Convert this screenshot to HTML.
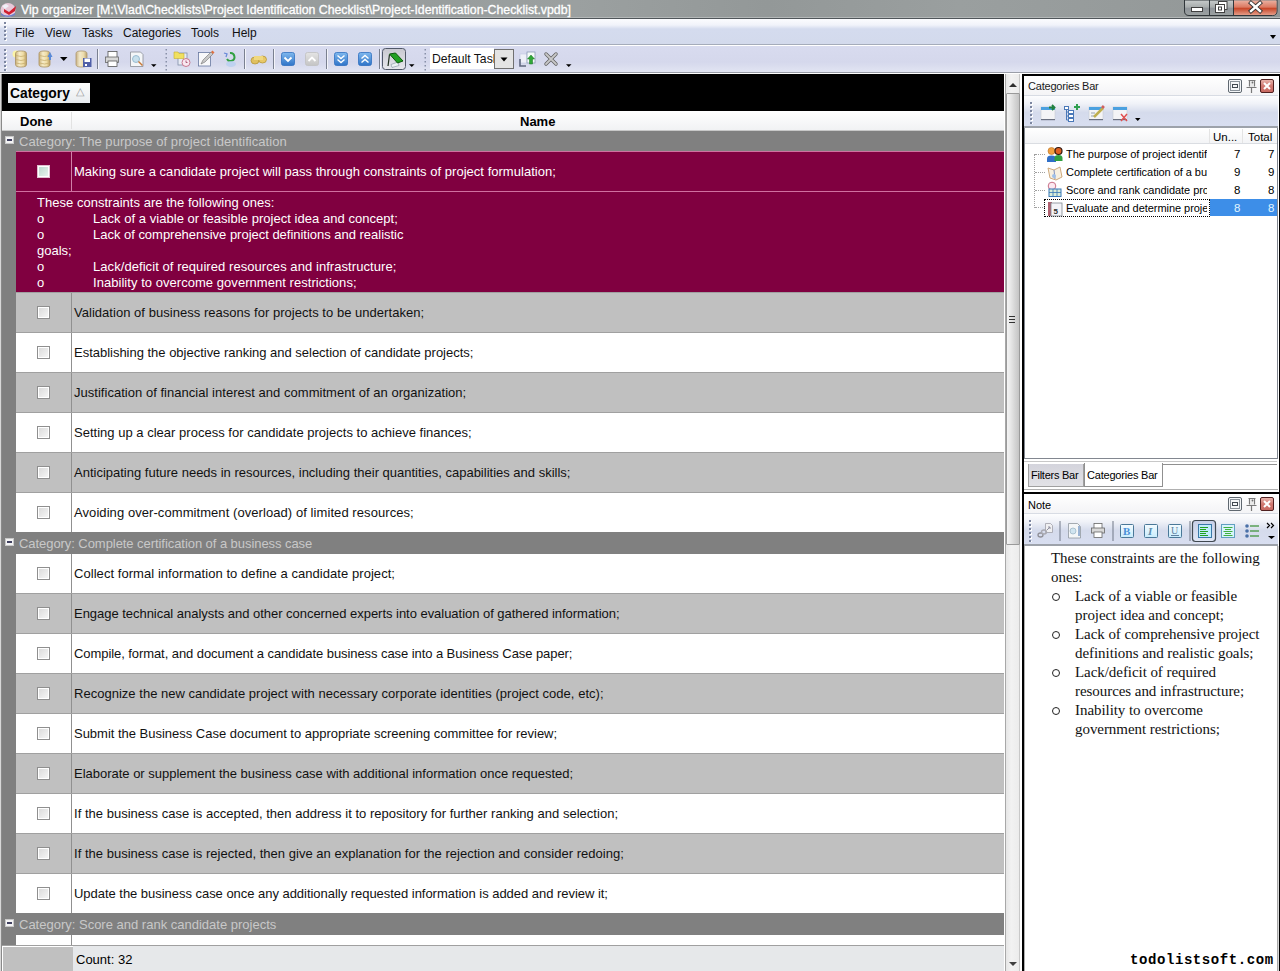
<!DOCTYPE html>
<html><head><meta charset="utf-8">
<style>
*{margin:0;padding:0;box-sizing:border-box}
html,body{width:1280px;height:971px;overflow:hidden;background:#fff;font-family:"Liberation Sans",sans-serif;font-size:13px;color:#000;position:relative}
div{position:absolute}
.nw{white-space:nowrap}
#title{left:0;top:0;width:1280px;height:19px;background:linear-gradient(90deg,#8d9292,#979c9c 25%,#9ba0a0 45%,#939898 60%,#9a9f9f 75%,#929797);border-bottom:1px solid #50565a;box-shadow:inset 0 -1px 0 #b4b8b8}
#menu{left:0;top:19px;width:1280px;height:26px;background:linear-gradient(#fbfcfe 0,#f1f3fa 6px,#d4dbee 10px,#d3daec 100%);border-bottom:1px solid #a5acba}
#tool{left:0;top:45px;width:1280px;height:29px;background:linear-gradient(#d8dbef,#d5d8ec 60%,#e3e6f3);border-top:1px solid #fff;border-bottom:1px solid #fff;box-shadow:inset 0 -1px 0 #9a9ea8}
.mi{top:26px;font-size:12px;color:#111;white-space:nowrap}
.grip{width:3px;background:radial-gradient(circle at 1px 1px,#7c86a0 0.9px,transparent 1.3px) 0 0/3px 4px,radial-gradient(circle at 2px 2px,#fff 0.9px,transparent 1.3px) 0 0/3px 4px}
.sep{width:2px;border-left:1px solid #6e7580;border-right:1px solid #fff}
#gridbg{left:0;top:74px;width:1005px;height:897px;background:#808080;border-left:1px solid #d8d8d8;box-shadow:inset 1px 0 0 #8a8a8a}
.row{left:16px;width:988px;height:40px;background:#fff;border-top:1px solid #a0a0a0}
.row.g{background:#c0c0c0}
.row.s{background:#800040;border-top-color:#d070a0}
.row.s .tx{color:#fff}
.row .cb{left:21px;top:13px;width:13px;height:13px;border:1px solid #8f8f8f;background:linear-gradient(135deg,#d8d8d8,#f8f8f8);box-shadow:inset 0 0 0 1px #fff}
.row.s .cb{border-color:#e0c0d0;background:linear-gradient(135deg,#b8d8cc,#eef6f2)}
.row .dv{left:55px;top:0;width:1px;height:39px;background:#909090}
.row.s .dv{background:#d080a8}
.row .tx{left:58px;top:12px;white-space:nowrap;color:#111}
.grp{left:2px;width:1002px;height:22px;z-index:1;background:#808080;color:#c8c8c8}
.grp .mn{left:3px;top:5px;width:9px;height:8px;background:#f4f4f4;border:1px solid #c8c8c8}
.grp .mn:after{content:"";position:absolute;left:1px;top:2px;width:5px;height:2px;background:#404060}
.grp .gt{left:17px;top:3px;white-space:nowrap}
.prev{left:16px;width:988px;height:101px;background:#800040;color:#fff;border-top:1px solid #d070a0}
.pl{left:21px;white-space:nowrap}

</style></head><body>
<div id="title">
  <svg style="position:absolute;left:0;top:2px" width="17" height="16" viewBox="0 0 17 16"><ellipse cx="8" cy="8" rx="7.5" ry="7" fill="#e8c8d8"/><path d="M1 11q6 5 14 0v2q-7 4-14 0z" fill="#7080c8"/><path d="M4 7l5 3 7-6-1 5-6 4-5-3z" fill="#d02030"/><path d="M2 4l4-2 3 2-4 3z" fill="#f0f0f8"/></svg>
  <div class="nw" style="left:21px;top:3px;font-size:12.3px;color:#fff;-webkit-text-stroke:0.3px #fff">Vip organizer [M:\Vlad\Checklists\Project Identification Checklist\Project-Identification-Checklist.vpdb]</div>
</div>
<svg style="position:absolute;left:1180px;top:0" width="100" height="19" viewBox="1180 0 100 19">
<defs>
<linearGradient id="wb" x1="0" y1="0" x2="0" y2="1"><stop offset="0" stop-color="#c8cccc"/><stop offset=".45" stop-color="#a8adad"/><stop offset=".55" stop-color="#90959a"/><stop offset="1" stop-color="#9ca2a2"/></linearGradient>
<linearGradient id="wc" x1="0" y1="0" x2="0" y2="1"><stop offset="0" stop-color="#eab0a0"/><stop offset=".45" stop-color="#dc7a62"/><stop offset=".55" stop-color="#c8482a"/><stop offset="1" stop-color="#e49c88"/></linearGradient>
</defs>
<path d="M1184.5 0v11q0 4.5 4.5 4.5h83.5q4.5 0 4.5-4.5v-11z" fill="url(#wb)" stroke="#30363a" stroke-width="1"/>
<path d="M1234 0.5h42.5v10.5q0 4-4 4h-38.5z" fill="url(#wc)"/>
<path d="M1209.5 0v15.5M1233.5 0v15.5" stroke="#30363a" stroke-width="1"/>
<rect x="1191.5" y="7.5" width="11" height="4" fill="#fff" stroke="#404040" stroke-width="1"/>
<rect x="1218.5" y="1.5" width="8.5" height="8" fill="#fff" stroke="#404040" stroke-width="1"/>
<rect x="1215.5" y="4.5" width="9" height="8" fill="#fff" stroke="#404040" stroke-width="1"/>
<rect x="1218.5" y="7" width="3" height="3" fill="none" stroke="#404040" stroke-width="1"/>
<path d="M1251 3l9 8M1260 3l-9 8" stroke="#303030" stroke-width="4.2" stroke-linecap="square"/>
<path d="M1251 3l9 8M1260 3l-9 8" stroke="#fff" stroke-width="2.4" stroke-linecap="square"/>
</svg>
<div id="menu"><div class="grip" style="left:4px;top:3px;height:20px"></div></div>
<div class="mi" style="left:15px">File</div>
<div class="mi" style="left:45px">View</div>
<div class="mi" style="left:82px">Tasks</div>
<div class="mi" style="left:123px">Categories</div>
<div class="mi" style="left:191px">Tools</div>
<div class="mi" style="left:232px">Help</div>
<div style="left:1270px;top:35px;width:0;height:0;border-left:3px solid transparent;border-right:3px solid transparent;border-top:4px solid #000"></div>
<div id="tool"><div class="grip" style="left:4px;top:3px;height:22px"></div></div>
<div id="gridbg"></div>
<div style="left:2px;top:74px;width:1002px;height:37px;background:#000"></div>
<div style="left:8px;top:83px;width:82px;height:20px;background:linear-gradient(#fcfcfc,#e8ecef)"></div>
<div class="nw" style="left:10px;top:86px;font-weight:bold;font-size:13.8px">Category</div>
<div style="left:76px;top:85px;font-size:11px;color:#999">&#9651;</div>
<div style="left:2px;top:111px;width:1002px;height:20px;background:linear-gradient(#fff,#f1f2f4);border-bottom:1px solid #c8c8c8"></div>
<div class="nw" style="left:20px;top:114px;font-weight:bold">Done</div>
<div style="left:71px;top:112px;width:1px;height:17px;background:#e2e2e2"></div>
<div class="nw" style="left:520px;top:114px;font-weight:bold">Name</div>

<svg style="position:absolute;left:0;top:45px" width="600" height="28" viewBox="0 45 600 28">
<defs>
<linearGradient id="db" x1="0" x2="1"><stop offset="0" stop-color="#c9b07a"/><stop offset=".35" stop-color="#f6ecc8"/><stop offset=".7" stop-color="#efdca4"/><stop offset="1" stop-color="#b59a60"/></linearGradient>
<linearGradient id="bl" x1="0" y1="0" x2="0" y2="1"><stop offset="0" stop-color="#7fb8ee"/><stop offset="1" stop-color="#2f74c8"/></linearGradient>
<linearGradient id="gr" x1="0" y1="0" x2="0" y2="1"><stop offset="0" stop-color="#e4e4e4"/><stop offset="1" stop-color="#c4c4c4"/></linearGradient>
<linearGradient id="pb" x1="0" y1="0" x2="0" y2="1"><stop offset="0" stop-color="#c8c8d0"/><stop offset="1" stop-color="#e8e8ee"/></linearGradient>
</defs>
<!-- db new -->
<circle cx="16" cy="54" r="3.5" fill="#fff6a0" opacity=".9"/>
<rect x="15.5" y="51" width="11" height="16" rx="5" ry="2.5" fill="url(#db)" stroke="#a89060" stroke-width=".8"/>
<path d="M16 55.5q5 2 10 0M16 59.5q5 2 10 0M16 63q5 2 10 0" stroke="#c8ae70" fill="none" stroke-width=".8"/>
<!-- db open -->
<rect x="39" y="51" width="11" height="16" rx="5" ry="2.5" fill="url(#db)" stroke="#a89060" stroke-width=".8"/>
<path d="M39.5 55.5q5 2 10 0M39.5 59.5q5 2 10 0M39.5 63q5 2 10 0" stroke="#c8ae70" fill="none" stroke-width=".8"/>
<path d="M50 52l2.5 5h-1.5v3h-2v-3h-1.5z" fill="#5a8ad8"/>
<path d="M60 57h7.5l-3.75 4z" fill="#000"/>
<!-- db save -->
<rect x="76" y="51" width="11" height="16" rx="5" ry="2.5" fill="url(#db)" stroke="#a89060" stroke-width=".8" opacity=".9"/>
<rect x="83" y="58" width="8.5" height="9" fill="#5060a8"/>
<rect x="84.5" y="58.5" width="5.5" height="3.5" fill="#fff"/>
<rect x="85" y="64" width="2" height="2" fill="#fff"/>
<!-- sep -->
<rect x="97" y="49" width="1" height="20" fill="#7a8090"/><rect x="98" y="49" width="1" height="20" fill="#fff" opacity=".7"/>
<!-- printer -->
<rect x="108" y="51.5" width="9" height="6" fill="#fff" stroke="#555" stroke-width=".8"/>
<rect x="105.5" y="57" width="13" height="5.5" fill="#d8d8d8" stroke="#666" stroke-width=".8"/>
<rect x="108" y="61" width="9" height="5.5" fill="#fff" stroke="#555" stroke-width=".8"/>
<!-- preview -->
<path d="M130.5 52h10l2.5 2.5v12h-12.5z" fill="#f4f6f8" stroke="#8a8e96" stroke-width=".8"/>
<circle cx="136" cy="59" r="3.5" fill="#c8e0ec" stroke="#8ab0c8" stroke-width=".8"/>
<path d="M138.5 61.5l4 4" stroke="#c87838" stroke-width="1.5"/>
<path d="M151 64.3h5.5l-2.75 2.8z" fill="#000"/>
<!-- grip -->
<g fill="#8890a8"><rect x="165.5" y="49" width="1.5" height="1.5"/><rect x="165.5" y="53" width="1.5" height="1.5"/><rect x="165.5" y="57" width="1.5" height="1.5"/><rect x="165.5" y="61" width="1.5" height="1.5"/><rect x="165.5" y="65" width="1.5" height="1.5"/><rect x="165.5" y="69" width="1.5" height="1.5"/></g>
<!-- folder clock -->
<rect x="178" y="53" width="9" height="12" fill="#e8ecf4" stroke="#8090a8" stroke-width=".8"/>
<path d="M174 52h4l1 1.5h5v5h-10z" fill="#f0e060" stroke="#c8b030" stroke-width=".6"/>
<circle cx="186" cy="62.5" r="4" fill="#f8e8f0" stroke="#c87890" stroke-width="1"/>
<path d="M186 60.5v2h1.5" stroke="#a04060" stroke-width=".8" fill="none"/>
<!-- page pencil -->
<rect x="198.5" y="52.5" width="12" height="13.5" fill="#f8f8fa" stroke="#6878a0" stroke-width=".8"/>
<path d="M201 64l2-4 8-8 2 2-8 8z" fill="#c8c8c8" stroke="#707070" stroke-width=".6"/>
<path d="M211 52l2 2 1.5-1.5-2-2z" fill="#e07040"/>
<!-- refresh -->
<path d="M224 53l3 1-1 3" stroke="#6a8ad8" stroke-width="1.3" fill="none"/>
<path d="M230 53a4 4 0 1 1 -3 6" stroke="#30a040" stroke-width="2" fill="none"/>
<ellipse cx="231" cy="64" rx="5" ry="3" fill="#b8d0f0" opacity=".8"/>
<!-- sep -->
<rect x="244" y="49" width="1" height="20" fill="#7a8090"/><rect x="245" y="49" width="1" height="20" fill="#fff" opacity=".7"/>
<!-- binoculars -->
<ellipse cx="255" cy="60.5" rx="4" ry="3.5" fill="#e0c060" stroke="#b09030" stroke-width=".7"/>
<ellipse cx="262.5" cy="59.5" rx="4" ry="3.5" fill="#e8c868" stroke="#b09030" stroke-width=".7"/>
<rect x="254" y="56" width="9" height="4" fill="#f0d880"/>
<!-- sep -->
<rect x="273" y="49" width="1" height="20" fill="#7a8090"/><rect x="274" y="49" width="1" height="20" fill="#fff" opacity=".7"/>
<!-- blue check -->
<rect x="281.5" y="52.5" width="13" height="13" rx="2" fill="url(#bl)" stroke="#3070c0" stroke-width=".8"/>
<path d="M284.5 57.5l3.5 3.5 3.5-3.5" stroke="#fff" stroke-width="1.8" fill="none"/>
<!-- gray up -->
<rect x="305.5" y="52.5" width="13" height="13" rx="2" fill="url(#gr)" stroke="#c0c0c0" stroke-width=".8"/>
<path d="M308.5 61l3.5-3.5 3.5 3.5" stroke="#fff" stroke-width="1.8" fill="none"/>
<!-- sep -->
<rect x="326" y="49" width="1" height="20" fill="#7a8090"/><rect x="327" y="49" width="1" height="20" fill="#fff" opacity=".7"/>
<!-- dbl down -->
<rect x="334.5" y="52.5" width="13" height="13" rx="2" fill="url(#bl)" stroke="#3070c0" stroke-width=".8"/>
<path d="M337.5 55.5l3.5 3 3.5-3M337.5 59.5l3.5 3 3.5-3" stroke="#fff" stroke-width="1.4" fill="none"/>
<!-- dbl up -->
<rect x="358.5" y="52.5" width="13" height="13" rx="2" fill="url(#bl)" stroke="#3070c0" stroke-width=".8"/>
<path d="M361.5 58.5l3.5-3 3.5 3M361.5 62.5l3.5-3 3.5 3" stroke="#fff" stroke-width="1.4" fill="none"/>
<!-- sep -->
<rect x="379" y="49" width="1" height="20" fill="#7a8090"/><rect x="380" y="49" width="1" height="20" fill="#fff" opacity=".7"/>
<!-- pressed -->
<rect x="382.5" y="48.5" width="23" height="21" rx="3" fill="url(#pb)" stroke="#505868" stroke-width="1"/>
<path d="M391 64.5l7-2.5 1 3.5-7 2z" fill="#eef2f4" stroke="#8090a0" stroke-width=".6"/>
<path d="M388 66l1.5-11.5" stroke="#203020" stroke-width="1.2"/>
<path d="M389.5 54l6-1 7.5 8-5.5 2z" fill="#22a022" stroke="#0c5a0c" stroke-width="1"/>
<path d="M409 64.3h5.5l-2.75 2.8z" fill="#000"/>
<!-- grip -->
<g fill="#8890a8"><rect x="424.5" y="49" width="1.5" height="1.5"/><rect x="424.5" y="53" width="1.5" height="1.5"/><rect x="424.5" y="57" width="1.5" height="1.5"/><rect x="424.5" y="61" width="1.5" height="1.5"/><rect x="424.5" y="65" width="1.5" height="1.5"/><rect x="424.5" y="69" width="1.5" height="1.5"/></g>
<!-- combo -->
<rect x="430" y="48" width="64" height="21" fill="#fff"/>
<rect x="494.5" y="49.5" width="19" height="19" fill="#e4e4e4" stroke="#707070" stroke-width="1"/>
<path d="M500.5 57.5h7l-3.5 4z" fill="#000"/>
<!-- green arrow pages -->
<rect x="520" y="54" width="7" height="9" fill="#eef0f8" stroke="#c0c8e0" stroke-width=".6"/>
<path d="M520 59v7h6" stroke="#606880" stroke-width="1.6" fill="none"/>
<rect x="527" y="52" width="8" height="11" fill="#f4faf8" stroke="#8090b0" stroke-width=".7"/>
<path d="M531 55l-3.5 4h2v5h3v-5h2z" fill="#30a838" stroke="#187020" stroke-width=".5"/>
<!-- x -->
<path d="M546 54l10 10M556 54l-10 10" stroke="#606060" stroke-width="3.4" stroke-linecap="round"/>
<path d="M546 54l10 10M556 54l-10 10" stroke="#c8c8c8" stroke-width="1.8" stroke-linecap="round"/>
<path d="M566 64.3h5.5l-2.75 2.8z" fill="#000"/>
</svg>
<div class="nw" style="left:432px;top:52px;width:62px;overflow:hidden;font-size:12.2px;color:#111">Default Task</div>

<div class="grp" style="top:131px;height:20px"><div class="mn" style="top:5px"></div><div class="gt" style="top:3px;letter-spacing:0.043px">Category: The purpose of project identification</div></div>
<div class="row s" style="top:151px"><div class="cb"></div><div class="dv"></div><div class="tx" style="letter-spacing:0.024px">Making sure a candidate project will pass through constraints of project formulation;</div></div>
<div class="prev" style="top:191px"><div class="pl" style="top:3px;letter-spacing:0.025px">These constraints are the following ones:</div><div class="pl" style="top:19px">o</div><div class="pl" style="top:19px;left:77px;letter-spacing:0.038px">Lack of a viable or feasible project idea and concept;</div><div class="pl" style="top:35px">o</div><div class="pl" style="top:35px;left:77px;letter-spacing:-0.018px">Lack of comprehensive project definitions and realistic</div><div class="pl" style="top:51px">goals;</div><div class="pl" style="top:67px">o</div><div class="pl" style="top:67px;left:77px;letter-spacing:0.065px">Lack/deficit of required resources and infrastructure;</div><div class="pl" style="top:83px">o</div><div class="pl" style="top:83px;left:77px;letter-spacing:0.044px">Inability to overcome government restrictions;</div></div>
<div class="row g" style="top:292px"><div class="cb"></div><div class="dv"></div><div class="tx" style="letter-spacing:0.033px">Validation of business reasons for projects to be undertaken;</div></div>
<div class="row" style="top:332px"><div class="cb"></div><div class="dv"></div><div class="tx" style="letter-spacing:-0.014px">Establishing the objective ranking and selection of candidate projects;</div></div>
<div class="row g" style="top:372px"><div class="cb"></div><div class="dv"></div><div class="tx" style="letter-spacing:0.029px">Justification of financial interest and commitment of an organization;</div></div>
<div class="row" style="top:412px"><div class="cb"></div><div class="dv"></div><div class="tx" style="letter-spacing:0.014px">Setting up a clear process for candidate projects to achieve finances;</div></div>
<div class="row g" style="top:452px"><div class="cb"></div><div class="dv"></div><div class="tx">Anticipating future needs in resources, including their quantities, capabilities and skills;</div></div>
<div class="row" style="top:492px"><div class="cb"></div><div class="dv"></div><div class="tx" style="letter-spacing:0.071px">Avoiding over-commitment (overload) of limited resources;</div></div>
<div class="grp" style="top:532px;height:22px"><div class="mn" style="top:6px"></div><div class="gt" style="top:4px;letter-spacing:-0.06px">Category: Complete certification of a business case</div></div>
<div class="row" style="top:553px"><div class="cb"></div><div class="dv"></div><div class="tx" style="letter-spacing:0.054px">Collect formal information to define a candidate project;</div></div>
<div class="row g" style="top:593px"><div class="cb"></div><div class="dv"></div><div class="tx" style="letter-spacing:-0.032px">Engage technical analysts and other concerned experts into evaluation of gathered information;</div></div>
<div class="row" style="top:633px"><div class="cb"></div><div class="dv"></div><div class="tx" style="letter-spacing:-0.073px">Compile, format, and document a candidate business case into a Business Case paper;</div></div>
<div class="row g" style="top:673px"><div class="cb"></div><div class="dv"></div><div class="tx" style="letter-spacing:0.022px">Recognize the new candidate project with necessary corporate identities (project code, etc);</div></div>
<div class="row" style="top:713px"><div class="cb"></div><div class="dv"></div><div class="tx" style="letter-spacing:-0.013px">Submit the Business Case document to appropriate screening committee for review;</div></div>
<div class="row g" style="top:753px"><div class="cb"></div><div class="dv"></div><div class="tx" style="letter-spacing:-0.012px">Elaborate or supplement the business case with additional information once requested;</div></div>
<div class="row" style="top:793px"><div class="cb"></div><div class="dv"></div><div class="tx" style="letter-spacing:0.021px">If the business case is accepted, then address it to repository for further ranking and selection;</div></div>
<div class="row g" style="top:833px"><div class="cb"></div><div class="dv"></div><div class="tx" style="letter-spacing:0.021px">If the business case is rejected, then give an explanation for the rejection and consider redoing;</div></div>
<div class="row" style="top:873px"><div class="cb"></div><div class="dv"></div><div class="tx" style="letter-spacing:-0.033px">Update the business case once any additionally requested information is added and review it;</div></div>
<div class="grp" style="top:913px;height:22px"><div class="mn" style="top:6px"></div><div class="gt" style="top:4px;letter-spacing:0px">Category: Score and rank candidate projects</div></div>
<div class="row" style="top:934px;height:11px"><div class="dv" style="height:10px"></div></div>
<!-- footer -->
<div style="left:2px;top:945px;width:1002px;height:26px;background:#e6e8ea;border-top:1px solid #a0a0a0"></div>
<div style="left:2px;top:946px;width:71px;height:25px;background:#c0c0c0;border-top:1px solid #fff;border-left:1px solid #fff"></div>
<div class="nw" style="left:76px;top:952px">Count: 32</div>

<!-- scrollbar -->
<div style="left:1004px;top:74px;width:18px;height:897px;background:#fff"></div>
<div style="left:1005px;top:74px;width:15px;height:897px;background:linear-gradient(90deg,#e6e6e6,#f2f2f2 40%,#ececec);border-left:1px solid #a8a8a8;border-right:1px solid #c8c8c8"></div>
<div style="left:1009px;top:83px;width:0;height:0;border-left:4px solid transparent;border-right:4px solid transparent;border-bottom:4px solid #303030"></div>
<div style="left:1006px;top:93px;width:14px;height:452px;background:linear-gradient(90deg,#f4f4f4,#e8e8e8 30%,#d8d8d8 60%,#c4c4c4);border:1px solid #9a9a9a;border-radius:1px"></div>
<div style="left:1009px;top:316px;width:6px;height:1px;background:#333;box-shadow:0 3px 0 #333,0 6px 0 #333"></div>
<div style="left:1009px;top:962px;width:0;height:0;border-left:4px solid transparent;border-right:4px solid transparent;border-top:4px solid #404040"></div>
<!-- right dock -->
<div style="left:1022px;top:74px;width:258px;height:897px;background:#fff;border-left:2px solid #000;border-top:2px solid #000;border-right:1px solid #000"></div>
<!-- categories bar title -->
<div style="left:1024px;top:76px;width:254px;height:20px;background:linear-gradient(#fff,#f4f4f6);border-bottom:1px solid #d8dce4"></div>
<div class="nw" style="left:1028px;top:80px;font-size:11px;letter-spacing:-0.2px;color:#1a1a1a">Categories Bar</div>
<!-- toolbar -->
<div style="left:1024px;top:96px;width:254px;height:32px;background:linear-gradient(#fdfdfe,#f0f2f8 25%,#d5dbec 55%,#d8def0 100%);border-bottom:2px solid #9da2aa"></div>
<div class="grip" style="left:1030px;top:102px;height:22px"></div>
<!-- list -->
<div style="left:1024px;top:128px;width:254px;height:331px;background:#fff;border-left:1px solid #828790;border-right:1px solid #828790;border-bottom:1px solid #828790"></div>
<div style="left:1025px;top:128px;width:252px;height:16px;background:linear-gradient(#fff,#f3f4f6);border-bottom:1px solid #dadde2"></div>
<div style="left:1209px;top:129px;width:1px;height:14px;background:#e4e4e4"></div>
<div style="left:1242px;top:129px;width:1px;height:14px;background:#e4e4e4"></div>
<div class="nw" style="left:1213px;top:131px;font-size:11.5px">Un...</div>
<div class="nw" style="left:1248px;top:131px;font-size:11.5px">Total</div>
<!-- tree lines -->
<div style="left:1034px;top:154px;width:1px;height:54px;border-left:1px dotted #a0a0a0"></div>
<div style="left:1035px;top:154px;width:10px;height:1px;border-top:1px dotted #a0a0a0"></div>
<div style="left:1035px;top:172px;width:10px;height:1px;border-top:1px dotted #a0a0a0"></div>
<div style="left:1035px;top:190px;width:10px;height:1px;border-top:1px dotted #a0a0a0"></div>
<div style="left:1035px;top:207px;width:10px;height:1px;border-top:1px dotted #a0a0a0"></div>
<div style="left:1210px;top:199px;width:67px;height:17px;background:#3d8ee8"></div>
<div style="left:1044px;top:199px;width:166px;height:18px;border:1px dotted #000"></div>
<div class="nw" style="left:1066px;top:148px;width:141px;overflow:hidden;font-size:11px;letter-spacing:-0.05px">The purpose of project identification</div>
<div class="nw" style="left:1066px;top:166px;width:141px;overflow:hidden;font-size:11px;letter-spacing:-0.05px">Complete certification of a business case</div>
<div class="nw" style="left:1066px;top:184px;width:141px;overflow:hidden;font-size:11px;letter-spacing:-0.05px">Score and rank candidate projects</div>
<div class="nw" style="left:1066px;top:202px;width:141px;overflow:hidden;font-size:11px;letter-spacing:-0.05px">Evaluate and determine projects</div>
<div class="nw" style="left:1234px;top:148px;font-size:11.5px">7</div><div class="nw" style="left:1268px;top:148px;font-size:11.5px">7</div>
<div class="nw" style="left:1234px;top:166px;font-size:11.5px">9</div><div class="nw" style="left:1268px;top:166px;font-size:11.5px">9</div>
<div class="nw" style="left:1234px;top:184px;font-size:11.5px">8</div><div class="nw" style="left:1268px;top:184px;font-size:11.5px">8</div>
<div class="nw" style="left:1234px;top:202px;font-size:11.5px;color:#e0f4ff">8</div><div class="nw" style="left:1268px;top:202px;font-size:11.5px;color:#e0f4ff">8</div>
<!-- tabs -->
<div style="left:1024px;top:459px;width:254px;height:33px;background:#fff"></div>
<div style="left:1024px;top:461px;width:253px;height:1px;background:#c8c8c8"></div>
<div style="left:1163px;top:464px;width:114px;height:1px;background:#909090"></div>
<div style="left:1028px;top:464px;width:56px;height:23px;background:linear-gradient(#d4d4dc,#e2e2e6);border:1px solid #a0a0a0;border-top:none"></div>
<div style="left:1084px;top:463px;width:79px;height:24px;background:#fff;border:1px solid #909090;border-top:none"></div>
<div class="nw" style="left:1031px;top:469px;font-size:11px;letter-spacing:-0.25px">Filters Bar</div>
<div class="nw" style="left:1087px;top:469px;font-size:11px;letter-spacing:-0.2px">Categories Bar</div>
<div style="left:1024px;top:489px;width:254px;height:1px;background:#b0b0b0"></div>
<!-- note panel -->
<div style="left:1022px;top:492px;width:257px;height:2px;background:#000"></div>
<div style="left:1024px;top:494px;width:254px;height:20px;background:linear-gradient(#fff,#f4f4f6);border-bottom:1px solid #d8dce4"></div>
<div class="nw" style="left:1028px;top:499px;font-size:11px">Note</div>
<div style="left:1024px;top:514px;width:254px;height:32px;background:linear-gradient(#fdfdfe,#f0f2f8 25%,#d5dbec 55%,#d8def0 100%);border-bottom:2px solid #9da2aa"></div>
<div class="grip" style="left:1029px;top:520px;height:22px"></div>
<div style="left:1024px;top:546px;width:255px;height:425px;background:#fff;border-left:1px solid #b0b0b0;border-right:1px solid #d8d8d8;box-shadow:inset -1px 0 0 #a8a8a8"></div>
<div style="left:1051px;top:546px;font-family:'Liberation Serif',serif;font-size:15px;line-height:19px;letter-spacing:-0.06px;color:#111">
<div class="nw" style="left:0;top:3px">These constraints are the following</div>
<div class="nw" style="left:0;top:22px">ones:</div>
<div style="left:1px;top:47px;width:8px;height:8px;border:1.3px solid #222;border-radius:50%"></div><div class="nw" style="left:24px;top:41px">Lack of a viable or feasible</div>
<div class="nw" style="left:24px;top:60px">project idea and concept;</div>
<div style="left:1px;top:85px;width:8px;height:8px;border:1.3px solid #222;border-radius:50%"></div><div class="nw" style="left:24px;top:79px">Lack of comprehensive project</div>
<div class="nw" style="left:24px;top:98px">definitions and realistic goals;</div>
<div style="left:1px;top:123px;width:8px;height:8px;border:1.3px solid #222;border-radius:50%"></div><div class="nw" style="left:24px;top:117px">Lack/deficit of required</div>
<div class="nw" style="left:24px;top:136px">resources and infrastructure;</div>
<div style="left:1px;top:161px;width:8px;height:8px;border:1.3px solid #222;border-radius:50%"></div><div class="nw" style="left:24px;top:155px">Inability to overcome</div>
<div class="nw" style="left:24px;top:174px">government restrictions;</div>
</div>
<div class="nw" style="left:1130px;top:952px;font-family:'Liberation Mono',monospace;font-weight:bold;font-size:14px;letter-spacing:0.58px;color:#000">todolistsoft.com</div>

<svg style="position:absolute;left:1024px;top:74px" width="256" height="480" viewBox="1024 74 256 480">
<defs>
<linearGradient id="rb" x1="0" y1="0" x2="0" y2="1"><stop offset="0" stop-color="#eab8b0"/><stop offset=".5" stop-color="#d07870"/><stop offset="1" stop-color="#c86860"/></linearGradient>
<linearGradient id="bx" x1="0" y1="0" x2="0" y2="1"><stop offset="0" stop-color="#f4fbff"/><stop offset="1" stop-color="#c8ecfc"/></linearGradient>
<linearGradient id="pr" x1="0" y1="0" x2="0" y2="1"><stop offset="0" stop-color="#c8d0e8"/><stop offset="1" stop-color="#e0e6f4"/></linearGradient>
</defs>
<!-- dock buttons categories -->
<g id="dockbtns">
<rect x="1228.5" y="79.5" width="13" height="13" rx="1.5" fill="#f4f6f8" stroke="#606870" stroke-width="1"/>
<rect x="1230.5" y="81.5" width="9" height="9" fill="none" stroke="#8a929a" stroke-width="1"/>
<rect x="1232.5" y="84.5" width="5" height="3" fill="none" stroke="#404850" stroke-width="1"/>
<path d="M1248.5 80.5h7M1249.5 81v5.5M1254.5 81v5.5M1246.5 87.5h10M1251.5 88v5" stroke="#7a7a7a" stroke-width="1.2" fill="none"/><rect x="1250" y="81" width="4" height="6" fill="#e8e8e8"/><circle cx="1252.5" cy="82.5" r=".9" fill="#707070"/>
<rect x="1260.5" y="79.5" width="13" height="13" rx="1.5" fill="url(#rb)" stroke="#502020" stroke-width="1"/>
<path d="M1264 83l6 6M1270 83l-6 6" stroke="#fff" stroke-width="2"/>
</g>
<use href="#dockbtns" x="0" y="418"/>
<!-- categories toolbar -->
<rect x="1041" y="107" width="14" height="12.5" fill="#f4f4f6" stroke="#c8ccd4" stroke-width=".6"/>
<rect x="1041" y="107" width="14" height="3" fill="#4aa0e0"/>
<rect x="1041" y="119" width="14" height="1.2" fill="#6a7080"/>
<path d="M1049 107.5h4M1052 105l2.5 2.5-2.5 2.5" stroke="#208040" stroke-width="1.8" fill="none"/>
<g stroke="#4a78b8" stroke-width="1" fill="#fff">
<rect x="1064.5" y="106.5" width="4" height="3"/><rect x="1068.5" y="110.5" width="5" height="3"/><rect x="1068.5" y="114.5" width="5" height="3"/><rect x="1068.5" y="118.5" width="5" height="3"/>
<path d="M1066.5 109.5v10.5h2M1066.5 112h2M1066.5 116h2" fill="none"/>
</g>
<path d="M1077 104v6M1074 107h6" stroke="#30a050" stroke-width="2"/>
<rect x="1089" y="107" width="14" height="12.5" fill="#f4f4f6" stroke="#c8ccd4" stroke-width=".6"/>
<rect x="1089" y="107" width="14" height="3" fill="#4aa0e0"/>
<rect x="1089" y="119" width="14" height="1.2" fill="#6a7080"/>
<path d="M1091 113h4M1091 116h4" stroke="#8090a0" stroke-width=".8"/>
<path d="M1094 117l9-9" stroke="#c0b050" stroke-width="2.5"/>
<path d="M1102 106l2 2" stroke="#d06060" stroke-width="2.5"/>
<rect x="1113" y="107" width="14" height="12.5" fill="#f4f4f6" stroke="#c8ccd4" stroke-width=".6"/>
<rect x="1113" y="107" width="14" height="3" fill="#4aa0e0"/>
<rect x="1113" y="119" width="14" height="1.2" fill="#6a7080"/>
<path d="M1121 114l6 7M1127 114l-6 7" stroke="#e05050" stroke-width="1.5"/>
<path d="M1135 118h5.5l-2.75 3z" fill="#000"/>
<!-- tree icons -->
<circle cx="1051.5" cy="151" r="3.5" fill="#f0a040" stroke="#b87020" stroke-width=".6"/>
<path d="M1047 162v-3.5q0-3 4.5-3t4.5 3v3.5z" fill="#3070c8"/>
<circle cx="1058.5" cy="151" r="3.5" fill="#e06020" stroke="#301810" stroke-width="1.2"/>
<path d="M1054.5 161v-3q0-3 4-3t4 3v3z" fill="#30a040"/>
<path d="M1048 168l6 2 6-3 2 10-6 3-6-2-2-10z" fill="#f8f0e0" stroke="#c8a070" stroke-width=".9"/>
<path d="M1054 170l1 9" stroke="#8090c0" stroke-width="1"/>
<circle cx="1054" cy="176" r="2" fill="#a0c0e8"/>
<circle cx="1052" cy="186" r="3.8" fill="#fce8f0" stroke="#c87088" stroke-width="1"/>
<rect x="1049" y="189" width="12" height="7.5" fill="#d8ecd8" stroke="#3878b8" stroke-width="1"/>
<path d="M1049 192.5h12M1053 189v7.5M1057 189v7.5" stroke="#3878b8" stroke-width=".8"/>
<rect x="1048" y="202" width="4" height="14" fill="#b06070"/>
<rect x="1051" y="203" width="11" height="13" fill="#f4f4f8" stroke="#808890" stroke-width=".8"/>
<text x="1053.5" y="214" font-family="Liberation Sans" font-size="8" font-weight="bold" fill="#303030">5</text>
<!-- note toolbar -->
<path d="M1045.5 523.5h5l2 2v7h-7z" fill="#f0f0f2" stroke="#a0a0a8" stroke-width=".8"/><path d="M1047 530l3-3m0 0h-2m2 0v2" stroke="#9090a0" stroke-width="1" fill="none"/><ellipse cx="1040.5" cy="535" rx="2.5" ry="2" fill="none" stroke="#909098" stroke-width="1.3"/><ellipse cx="1044" cy="532" rx="2.5" ry="2" fill="none" stroke="#a8a8b0" stroke-width="1.3"/>
<rect x="1059.5" y="521" width="1" height="20" fill="#707888"/>
<path d="M1068.5 523.5h9l3 3v11.5h-12z" fill="#f4f6f8" stroke="#9098a0" stroke-width=".8"/>
<circle cx="1073" cy="531" r="3" fill="#d0e4f0" stroke="#a0b8c8" stroke-width=".8"/>
<path d="M1079 526v10" stroke="#4070b0" stroke-width="1"/>
<rect x="1094" y="523.5" width="8" height="5" fill="#fff" stroke="#666" stroke-width=".8"/>
<rect x="1091.5" y="528" width="13" height="5" fill="#d8d8d8" stroke="#666" stroke-width=".8"/>
<rect x="1094" y="532" width="8" height="5.5" fill="#fff" stroke="#666" stroke-width=".8"/>
<rect x="1112.5" y="521" width="1" height="20" fill="#707888"/>
<rect x="1120.5" y="524.5" width="13" height="13" rx="1" fill="url(#bx)" stroke="#4a7898" stroke-width="1"/>
<text x="1123" y="535" font-family="Liberation Serif" font-size="11" font-weight="bold" fill="#4a90d8">B</text>
<rect x="1144.5" y="524.5" width="13" height="13" rx="1" fill="url(#bx)" stroke="#4a7898" stroke-width="1"/>
<text x="1148" y="535" font-family="Liberation Serif" font-size="11" font-style="italic" font-weight="bold" fill="#6090b0">I</text>
<rect x="1168.5" y="524.5" width="13" height="13" rx="1" fill="url(#bx)" stroke="#4a7898" stroke-width="1"/>
<text x="1171" y="534" font-family="Liberation Serif" font-size="10" fill="#6080a0">U</text>
<rect x="1171" y="535" width="8" height="1" fill="#6080a0"/>
<rect x="1189.5" y="521" width="1" height="20" fill="#707888"/>
<rect x="1192.5" y="520.5" width="23" height="21" rx="3" fill="url(#pr)" stroke="#404850" stroke-width="1.2"/>
<rect x="1198.5" y="524.5" width="13" height="13" fill="#c0ecfc" stroke="#3a78a8" stroke-width="1"/>
<path d="M1200 527.5h8M1200 529.5h6M1200 531.5h8M1200 533.5h6M1200 535.5h8" stroke="#20a020" stroke-width="1"/>
<rect x="1221.5" y="524.5" width="13" height="13" fill="#d8f4fc" stroke="#60a0c0" stroke-width="1"/>
<path d="M1223.5 527.5h9M1225 529.5h6M1223.5 531.5h9M1225 533.5h6M1223.5 535.5h9" stroke="#40b040" stroke-width="1"/>
<circle cx="1247" cy="526" r="1.8" fill="#4a70a8"/><circle cx="1247" cy="531" r="1.8" fill="#4a70a8"/><circle cx="1247" cy="536" r="1.8" fill="#4a70a8"/>
<path d="M1250 526h9M1250 531h9M1250 536h9" stroke="#58a058" stroke-width="1.6"/>
<path d="M1267 523l2.5 2.5-2.5 2.5M1271 523l2.5 2.5-2.5 2.5" stroke="#000" stroke-width="1.2" fill="none"/>
<path d="M1268 536h7l-3.5 3z" fill="#000"/>
</svg>

</body></html>
